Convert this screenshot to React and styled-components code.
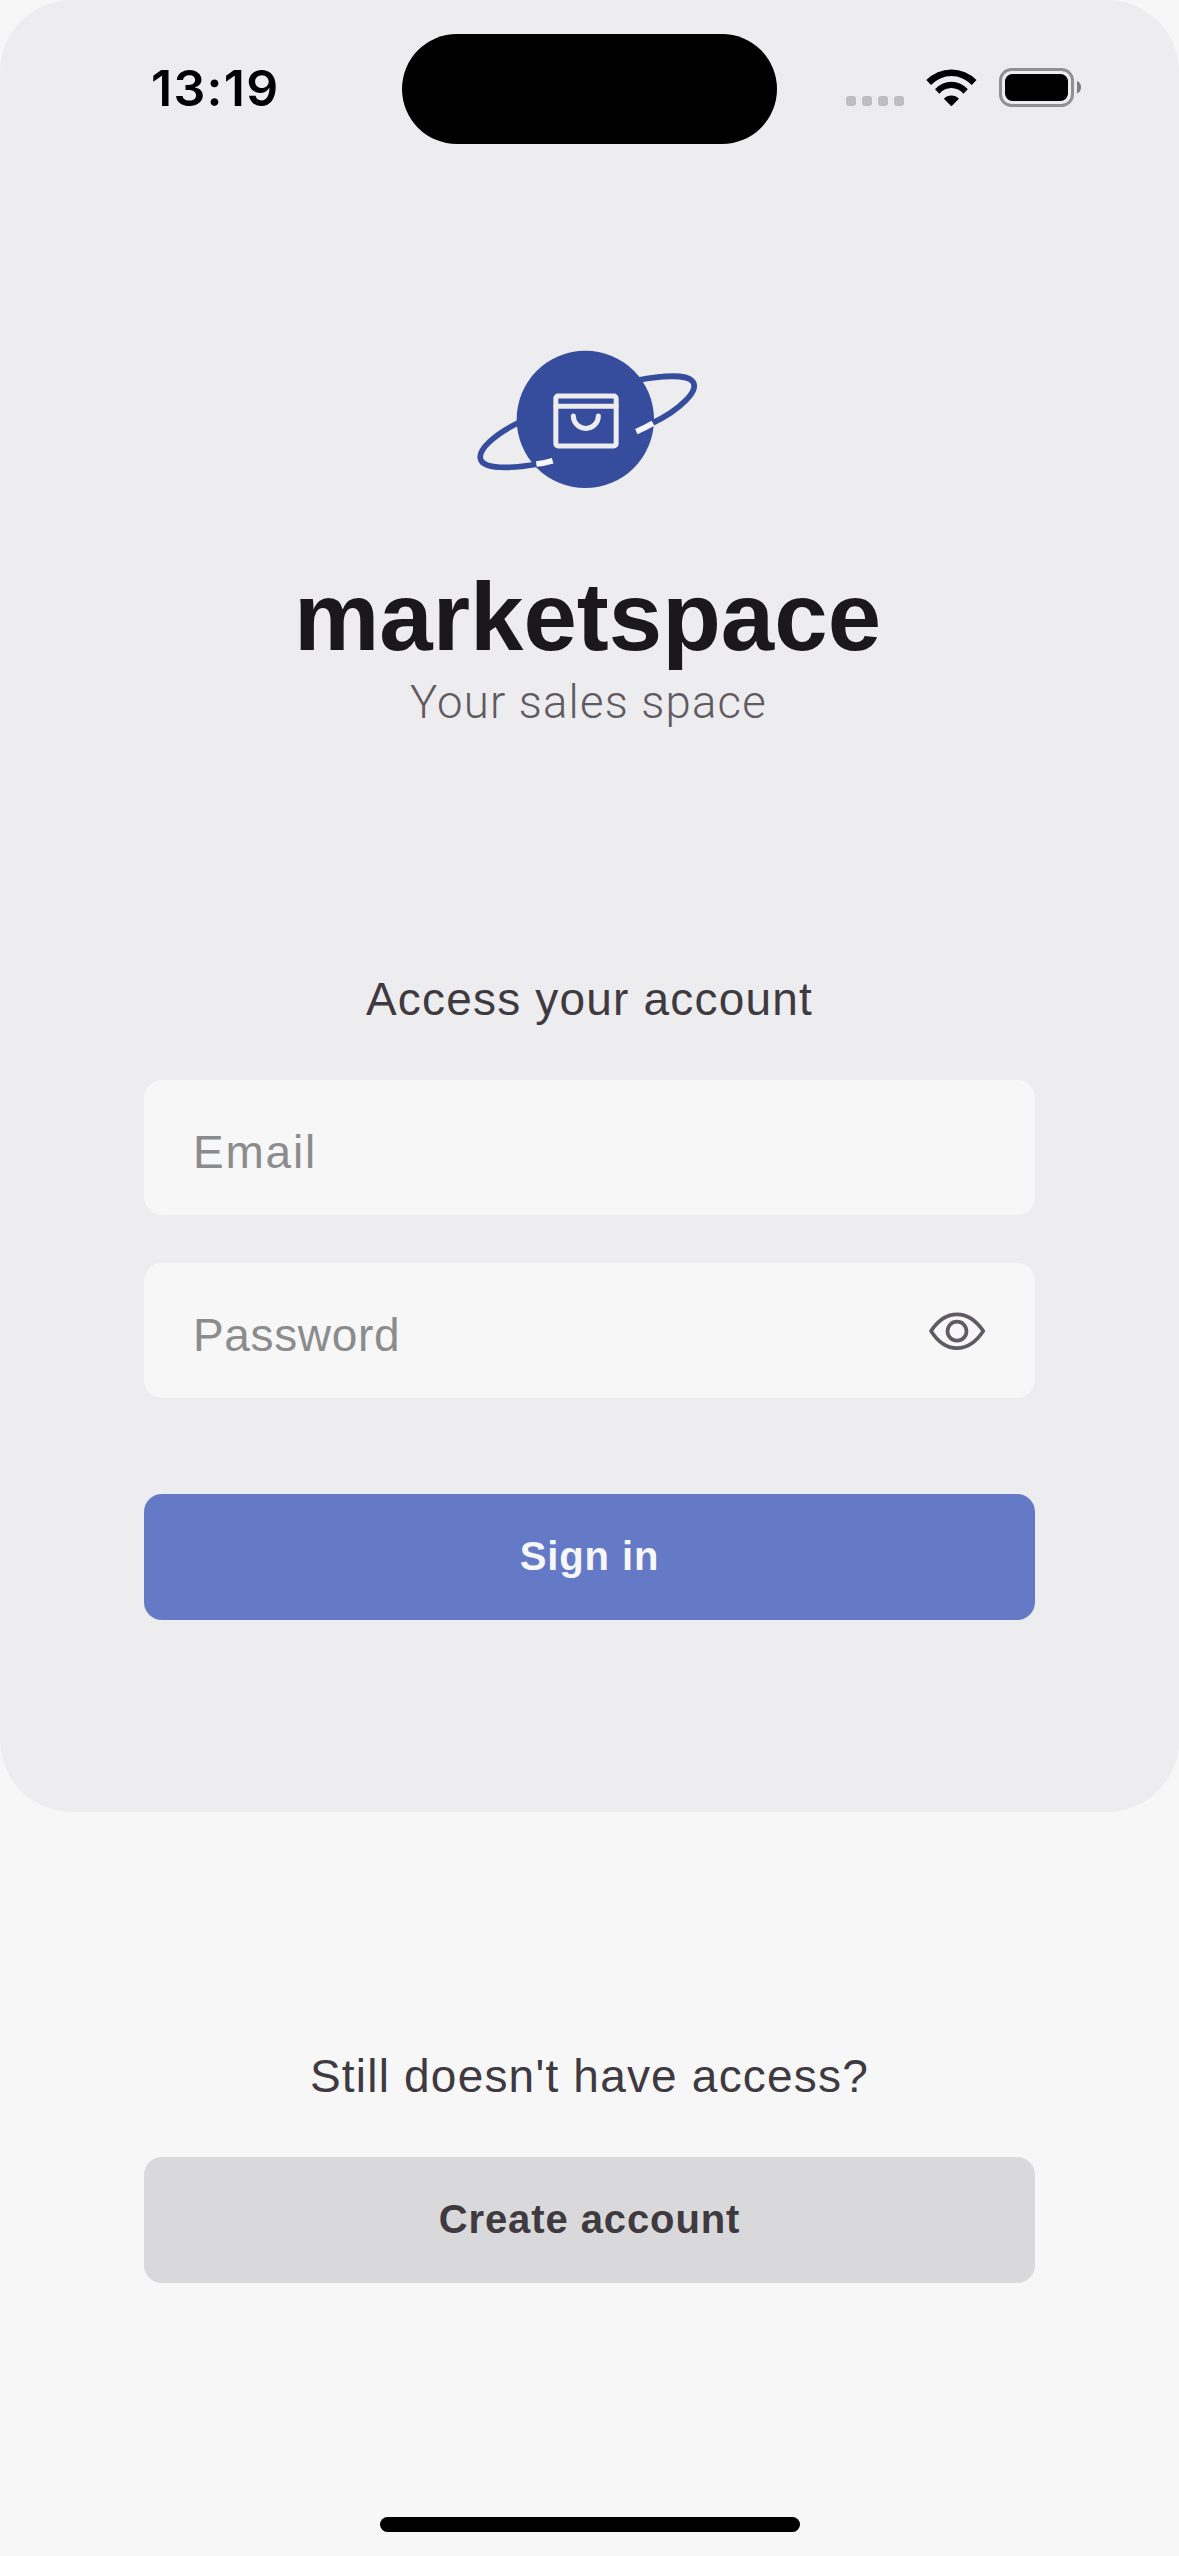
import React, { useState } from 'react';
import styled, { createGlobalStyle, ThemeProvider } from 'styled-components';

const theme = {
  gray1: '#1A181B',
  gray2: '#3E3A40',
  gray3: '#5F5B62',
  gray4: '#8C8C8C',
  gray5: '#D9D8DA',
  gray6: '#EDECEE',
  gray7: '#F7F7F8',
  blueLight: '#647AC7',
  blue: '#364D9D',
};

const GlobalStyle = createGlobalStyle`
  *, *::before, *::after { box-sizing: border-box; }
  body {
    margin: 0;
    background: #F7F7F8;
    font-family: "Liberation Sans", Arial, sans-serif;
  }
`;

const Screen = styled.div`
  display: flex;
  flex-direction: column;
  width: 1179px;
  height: 2556px;
  overflow: hidden;
  background: ${({ theme }) => theme.gray7};
`;

const Panel = styled.main`
  display: flex;
  flex-direction: column;
  height: 1812px;
  flex: none;
  border-radius: 72px;
  background: ${({ theme }) => theme.gray6};
`;

const StatusBar = styled.header`
  display: grid;
  grid-template-columns: 402px 375px 1fr;
  align-items: start;
  height: 144px;
`;

const Time = styled.time`
  padding: 58px 0 0 151px;
  font-family: Inter, sans-serif;
  font-size: 50px;
  font-weight: 600;
  line-height: 60px;
  letter-spacing: 1.3px;
  color: #000;
`;

const Island = styled.div`
  height: 110px;
  margin-top: 34px;
  border-radius: 56px;
  background: #000;
`;

const StatusIcons = styled.div`
  display: flex;
  align-items: flex-start;
  padding: 68px 0 0 69px;
`;

const SignalDots = styled.div`
  display: flex;
  gap: 6px;
  margin: 28px 22px 0 0;
`;

const Dot = styled.span`
  width: 10px;
  height: 10px;
  border-radius: 3px;
  background: #bebdbf;
`;

const WifiIcon = styled.svg`
  width: 51px;
  height: 38px;
  margin: 1px 22px 0 0;
`;

const BatteryIcon = styled.svg`
  width: 83px;
  height: 39px;
`;

const Brand = styled.section`
  display: flex;
  flex-direction: column;
  align-items: center;
  padding-top: 186px;
`;

const Logo = styled.svg`
  width: 260px;
  height: 170px;
`;

const Title = styled.h1`
  margin: 61px 4px 0 0;
  font-size: 96px;
  font-weight: 700;
  line-height: 112px;
  color: ${({ theme }) => theme.gray1};
`;

const Subtitle = styled.p`
  margin: 0 2px 0 0;
  font-family: Roboto, sans-serif;
  font-size: 45.5px;
  font-weight: 300;
  line-height: 59px;
  letter-spacing: 1.2px;
  color: ${({ theme }) => theme.gray3};
`;

const Form = styled.form`
  display: flex;
  flex-direction: column;
  padding: 237px 144px 0;
`;

const Prompt = styled.p`
  margin: 0 0 51px;
  font-size: 46px;
  line-height: 60px;
  letter-spacing: 1.2px;
  text-align: center;
  color: ${({ theme }) => theme.gray2};
`;

const Field = styled.label`
  display: flex;
  align-items: center;
  height: 135px;
  padding: 0 48px 0 49px;
  margin-bottom: 48px;
  border-radius: 18px;
  background: ${({ theme }) => theme.gray7};
`;

const Input = styled.input`
  flex: 1;
  min-width: 0;
  height: 100%;
  padding: 9px 0 0;
  border: 0;
  outline: 0;
  background: transparent;
  font: 400 46px "Liberation Sans", Arial, sans-serif;
  letter-spacing: ${({ $spacing }) => $spacing}px;
  color: ${({ theme }) => theme.gray2};

  &::placeholder {
    color: ${({ theme }) => theme.gray4};
    opacity: 1;
  }
`;

const IconButton = styled.button`
  display: flex;
  padding: 0;
  border: 0;
  background: none;
`;

const EyeIcon = styled.svg`
  width: 60px;
  height: 43.33px;
  color: ${({ theme }) => theme.gray3};
`;

const Button = styled.button`
  height: 126px;
  padding: 0 0 2px;
  margin-top: ${({ $offset }) => $offset || 0}px;
  border: 0;
  border-radius: 18px;
  font: 700 40px "Liberation Sans", Arial, sans-serif;
  letter-spacing: 0.9px;
  color: ${({ theme, $primary }) => ($primary ? theme.gray7 : theme.gray2)};
  background: ${({ theme, $primary }) => ($primary ? theme.blueLight : theme.gray5)};
`;

const SignUp = styled.section`
  display: flex;
  flex-direction: column;
  padding: 234px 144px 0;
`;

const HomeIndicator = styled.div`
  align-self: center;
  width: 420px;
  height: 15px;
  margin: auto 0 24px;
  border-radius: 8px;
  background: #000;
`;

function Wifi() {
  return (
    <WifiIcon viewBox="0 0 51 38" aria-hidden="true">
      <path d="M.3 11A35 35 0 0 1 50.5 11L45.8 15.9A28 28 0 0 0 5 15.9Z" />
      <path d="M9 20.2A22 22 0 0 1 41.8 20.2L37.4 24.8A15.4 15.4 0 0 0 13.4 24.8Z" />
      <path d="M17.9 29.8A10.4 10.4 0 0 1 32.9 29.8L26 36.8Q25.4 37.3 24.8 36.8Z" />
    </WifiIcon>
  );
}

function Battery() {
  return (
    <BatteryIcon viewBox="0 0 83 39" aria-hidden="true">
      <rect x="1.5" y="1.5" width="72" height="36" rx="11" fill="none" stroke="#909091" strokeWidth="3" />
      <rect x="6" y="6" width="63" height="27" rx="7.5" />
      <path d="M78 13C80.8 14.2 82 16.6 82 19.3S80.8 24.4 78 25.6Z" fill="#7e7e7f" />
    </BatteryIcon>
  );
}

function BrandLogo() {
  return (
    <Logo viewBox="0 0 780 510" fill="none" role="img" aria-label="marketspace">
      <g stroke={theme.blue} strokeWidth="17">
        <path d="M535 150C600 138 676 132 696 152C722 178 664 238 574 281" />
        <path d="M180 276C104 312 49 362 63 391C75 417 146 417 236 402" />
      </g>
      <circle cx="376" cy="268" r="206" fill={theme.blue} />
      <g stroke={theme.gray7} strokeWidth="17">
        <path d="M529 305Q556 293 579 280" />
        <path d="M229 402Q254 399 278 392" />
      </g>
      <g stroke={theme.gray6} strokeWidth="15" strokeLinecap="round">
        <rect x="287.5" y="198" width="181" height="150" rx="7" />
        <path d="M288 228.500H468" />
        <path d="M340 258a37.500 37.500 0 0 0 75 0" />
      </g>
    </Logo>
  );
}

function Eye() {
  return (
    <EyeIcon viewBox="141 206 180 130" fill="none" stroke="currentColor" strokeWidth="11" strokeLinejoin="round">
      <path d="M153 272C174 240 202 222 231 222S288 240 310 272C288 305 260 323.500 231 323.500S174 305 153 272Z" />
      <circle cx="231" cy="272.500" r="28.500" />
    </EyeIcon>
  );
}

export default function App() {
  const [visible, setVisible] = useState(false);
  return (
    <ThemeProvider theme={theme}>
      <GlobalStyle />
      <Screen>
        <Panel>
          <StatusBar>
            <Time>13:19</Time>
            <Island />
            <StatusIcons>
              <SignalDots>
                <Dot />
                <Dot />
                <Dot />
                <Dot />
              </SignalDots>
              <Wifi />
              <Battery />
            </StatusIcons>
          </StatusBar>
          <Brand>
            <BrandLogo />
            <Title>marketspace</Title>
            <Subtitle>Your sales space</Subtitle>
          </Brand>
          <Form onSubmit={(e) => e.preventDefault()}>
            <Prompt>Access your account</Prompt>
            <Field>
              <Input type="email" placeholder="Email" $spacing={1.8} />
            </Field>
            <Field>
              <Input type={visible ? 'text' : 'password'} placeholder="Password" $spacing={0.65} />
              <IconButton type="button" aria-label="Show password" onClick={() => setVisible(!visible)}>
                <Eye />
              </IconButton>
            </Field>
            <Button $primary $offset={48}>Sign in</Button>
          </Form>
        </Panel>
        <SignUp>
          <Prompt>Still doesn't have access?</Prompt>
          <Button>Create account</Button>
        </SignUp>
        <HomeIndicator />
      </Screen>
    </ThemeProvider>
  );
}
